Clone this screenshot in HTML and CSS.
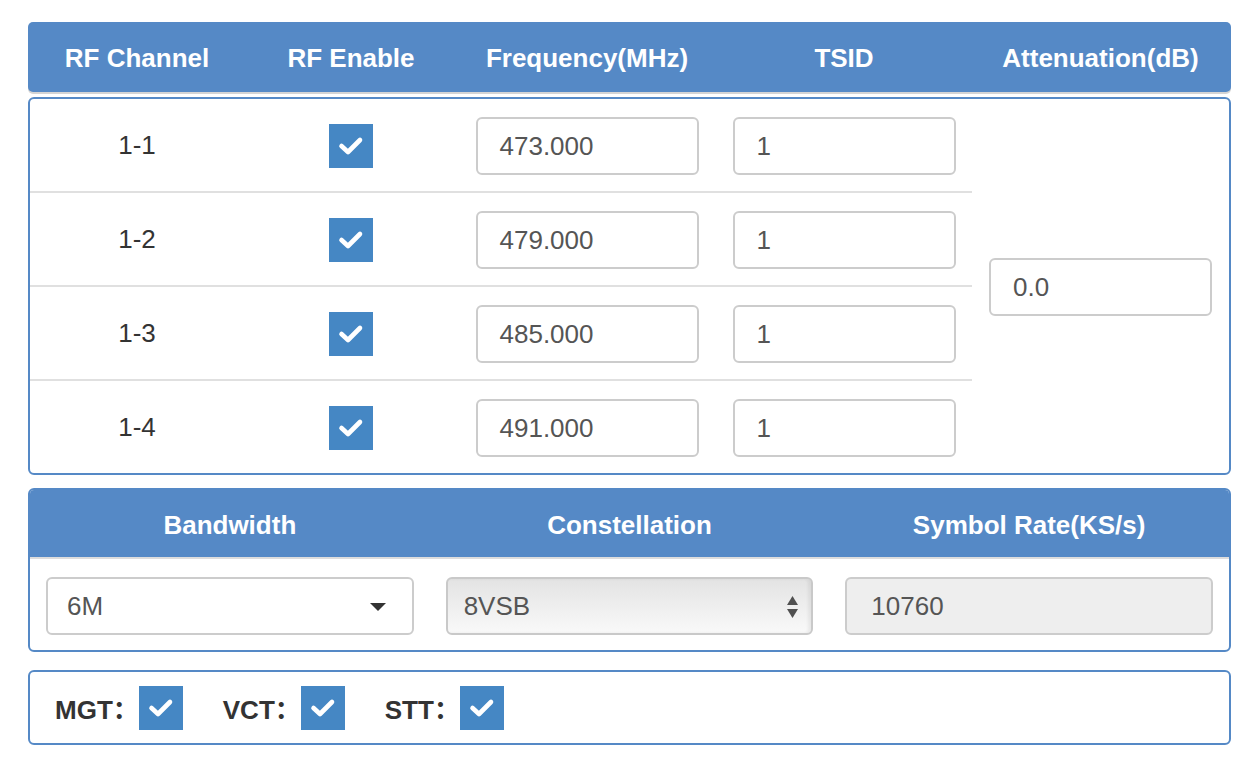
FILE: index.html
```html
<!DOCTYPE html>
<html>
<head>
<meta charset="utf-8">
<link rel="stylesheet" href="styles.css">
</head>
<body>
<div class="wrap">
  <div class="thead">
    <div class="th">RF Channel</div>
    <div class="th">RF Enable</div>
    <div class="th">Frequency(MHz)</div>
    <div class="th">TSID</div>
    <div class="th">Attenuation(dB)</div>
  </div>

  <div class="tpanel">
    <div class="td sep">1-1</div>
    <div class="td sep"><span class="chk"><svg viewBox="0 0 44 44"><polyline points="12.5,22 19,28 31,16"/></svg></span></div>
    <div class="td sep"><div class="field">473.000</div></div>
    <div class="td sep"><div class="field">1</div></div>

    <div class="td att"><div class="field">0.0</div></div>

    <div class="td sep">1-2</div>
    <div class="td sep"><span class="chk"><svg viewBox="0 0 44 44"><polyline points="12.5,22 19,28 31,16"/></svg></span></div>
    <div class="td sep"><div class="field">479.000</div></div>
    <div class="td sep"><div class="field">1</div></div>

    <div class="td sep">1-3</div>
    <div class="td sep"><span class="chk"><svg viewBox="0 0 44 44"><polyline points="12.5,22 19,28 31,16"/></svg></span></div>
    <div class="td sep"><div class="field">485.000</div></div>
    <div class="td sep"><div class="field">1</div></div>

    <div class="td">1-4</div>
    <div class="td"><span class="chk"><svg viewBox="0 0 44 44"><polyline points="12.5,22 19,28 31,16"/></svg></span></div>
    <div class="td"><div class="field">491.000</div></div>
    <div class="td"><div class="field">1</div></div>
  </div>

  <div class="panel2">
    <div class="p2head">
      <div class="th">Bandwidth</div>
      <div class="th">Constellation</div>
      <div class="th">Symbol Rate(KS/s)</div>
    </div>
    <div class="p2body">
      <div class="cell">
        <div class="field sel">6M<svg class="caret" viewBox="0 0 16 8"><polygon points="0,0 16,0 8,8"/></svg></div>
      </div>
      <div class="cell">
        <div class="field native">8VSB<svg class="updown" viewBox="0 0 11 24"><polygon points="5.5,0 11,9 0,9"/><polygon points="0,13 11,13 5.5,22"/></svg></div>
      </div>
      <div class="cell">
        <div class="field disabled">10760</div>
      </div>
    </div>
  </div>

  <div class="panel3">
    <div class="opt"><span class="lbl">MGT：</span><span class="chk"><svg viewBox="0 0 44 44"><polyline points="12.5,22 19,28 31,16"/></svg></span></div>
    <div class="opt"><span class="lbl">VCT：</span><span class="chk"><svg viewBox="0 0 44 44"><polyline points="12.5,22 19,28 31,16"/></svg></span></div>
    <div class="opt"><span class="lbl">STT：</span><span class="chk"><svg viewBox="0 0 44 44"><polyline points="12.5,22 19,28 31,16"/></svg></span></div>
  </div>
</div>
</body>
</html>
```

FILE: styles.css
```css
* { box-sizing: border-box; }

html, body {
  margin: 0;
  padding: 0;
  background: #ffffff;
}

body {
  font-family: "Liberation Sans", Arial, "Noto Sans CJK SC", sans-serif;
  font-size: 26px;
  color: #333333;
}

.wrap {
  width: 1203px;
  margin: 22px 0 0 28px;
}

.thead {
  display: grid;
  grid-template-columns: 214px 214px 258px 256px 1fr;
  height: 70px;
  padding: 3px 2px 0;
  background: #5589c6;
  border-radius: 5px;
  box-shadow: 0 2px 0 #d4d4d4;
}

.th {
  display: flex;
  align-items: center;
  justify-content: center;
  color: #ffffff;
  font-weight: bold;
  font-size: 26px;
}

.tpanel {
  margin-top: 5px;
  border: 2px solid #5589c6;
  border-radius: 6px;
  display: grid;
  grid-template-columns: 214px 214px 258px 256px 1fr;
  grid-template-rows: 94px 94px 94px 92px;
}

.td {
  display: flex;
  align-items: center;
  justify-content: center;
  padding-top: 1px;
}

.td.sep {
  border-bottom: 2px solid #e0e0e0;
}

.td.att {
  grid-column: 5;
  grid-row: 1 / 5;
  padding-top: 0;
}

.field {
  width: 223px;
  height: 58px;
  border: 2px solid #cccccc;
  border-radius: 6px;
  background: #ffffff;
  color: #555555;
  display: flex;
  align-items: center;
  padding: 1px 0 0 22px;
  font-size: 26px;
}

.td .field {
  margin-top: 1px;
}

.td.att .field {
  margin-top: 2px;
}

.chk {
  width: 44px;
  height: 44px;
  background: #4587c4;
  display: inline-flex;
  flex: none;
}

.chk svg {
  width: 44px;
  height: 44px;
}

.chk polyline {
  fill: none;
  stroke: #ffffff;
  stroke-width: 4.6;
  stroke-linecap: round;
  stroke-linejoin: round;
}

.panel2 {
  margin-top: 13px;
  border: 2px solid #5589c6;
  border-radius: 6px;
}

.p2head {
  display: grid;
  grid-template-columns: 1fr 1fr 1fr;
  height: 69px;
  padding-top: 3px;
  background: #5589c6;
  border-bottom: 2px solid #dddddd;
  border-radius: 4px 4px 0 0;
}

.p2body {
  display: grid;
  grid-template-columns: 1fr 1fr 1fr;
  padding: 18px 0 15px;
}

.cell {
  padding: 0 16px;
}

.cell .field {
  width: 100%;
  position: relative;
}

.field.sel {
  padding-left: 19px;
}

.caret {
  position: absolute;
  right: 26px;
  top: 24px;
  width: 16px;
  height: 8px;
}

.caret polygon {
  fill: #333333;
}

.field.native {
  padding-left: 16px;
  background: linear-gradient(to bottom, #e3e3e3 0%, #ededed 45%, #f9f9f9 100%);
  border-color: #c9c9c9;
  box-shadow: inset -3px 0 3px rgba(0, 0, 0, 0.06);
}

.updown {
  position: absolute;
  right: 13px;
  top: 17px;
  width: 11px;
  height: 24px;
}

.updown polygon {
  fill: #505050;
}

.field.disabled {
  background: #eeeeee;
  padding-left: 24px;
}

.panel3 {
  margin-top: 18px;
  height: 75px;
  border: 2px solid #5589c6;
  border-radius: 6px;
  display: flex;
  align-items: center;
  padding-left: 25px;
}

.opt {
  display: flex;
  align-items: center;
  margin-right: 40px;
}

.lbl {
  font-weight: bold;
  color: #333333;
  font-size: 26px;
}
```
